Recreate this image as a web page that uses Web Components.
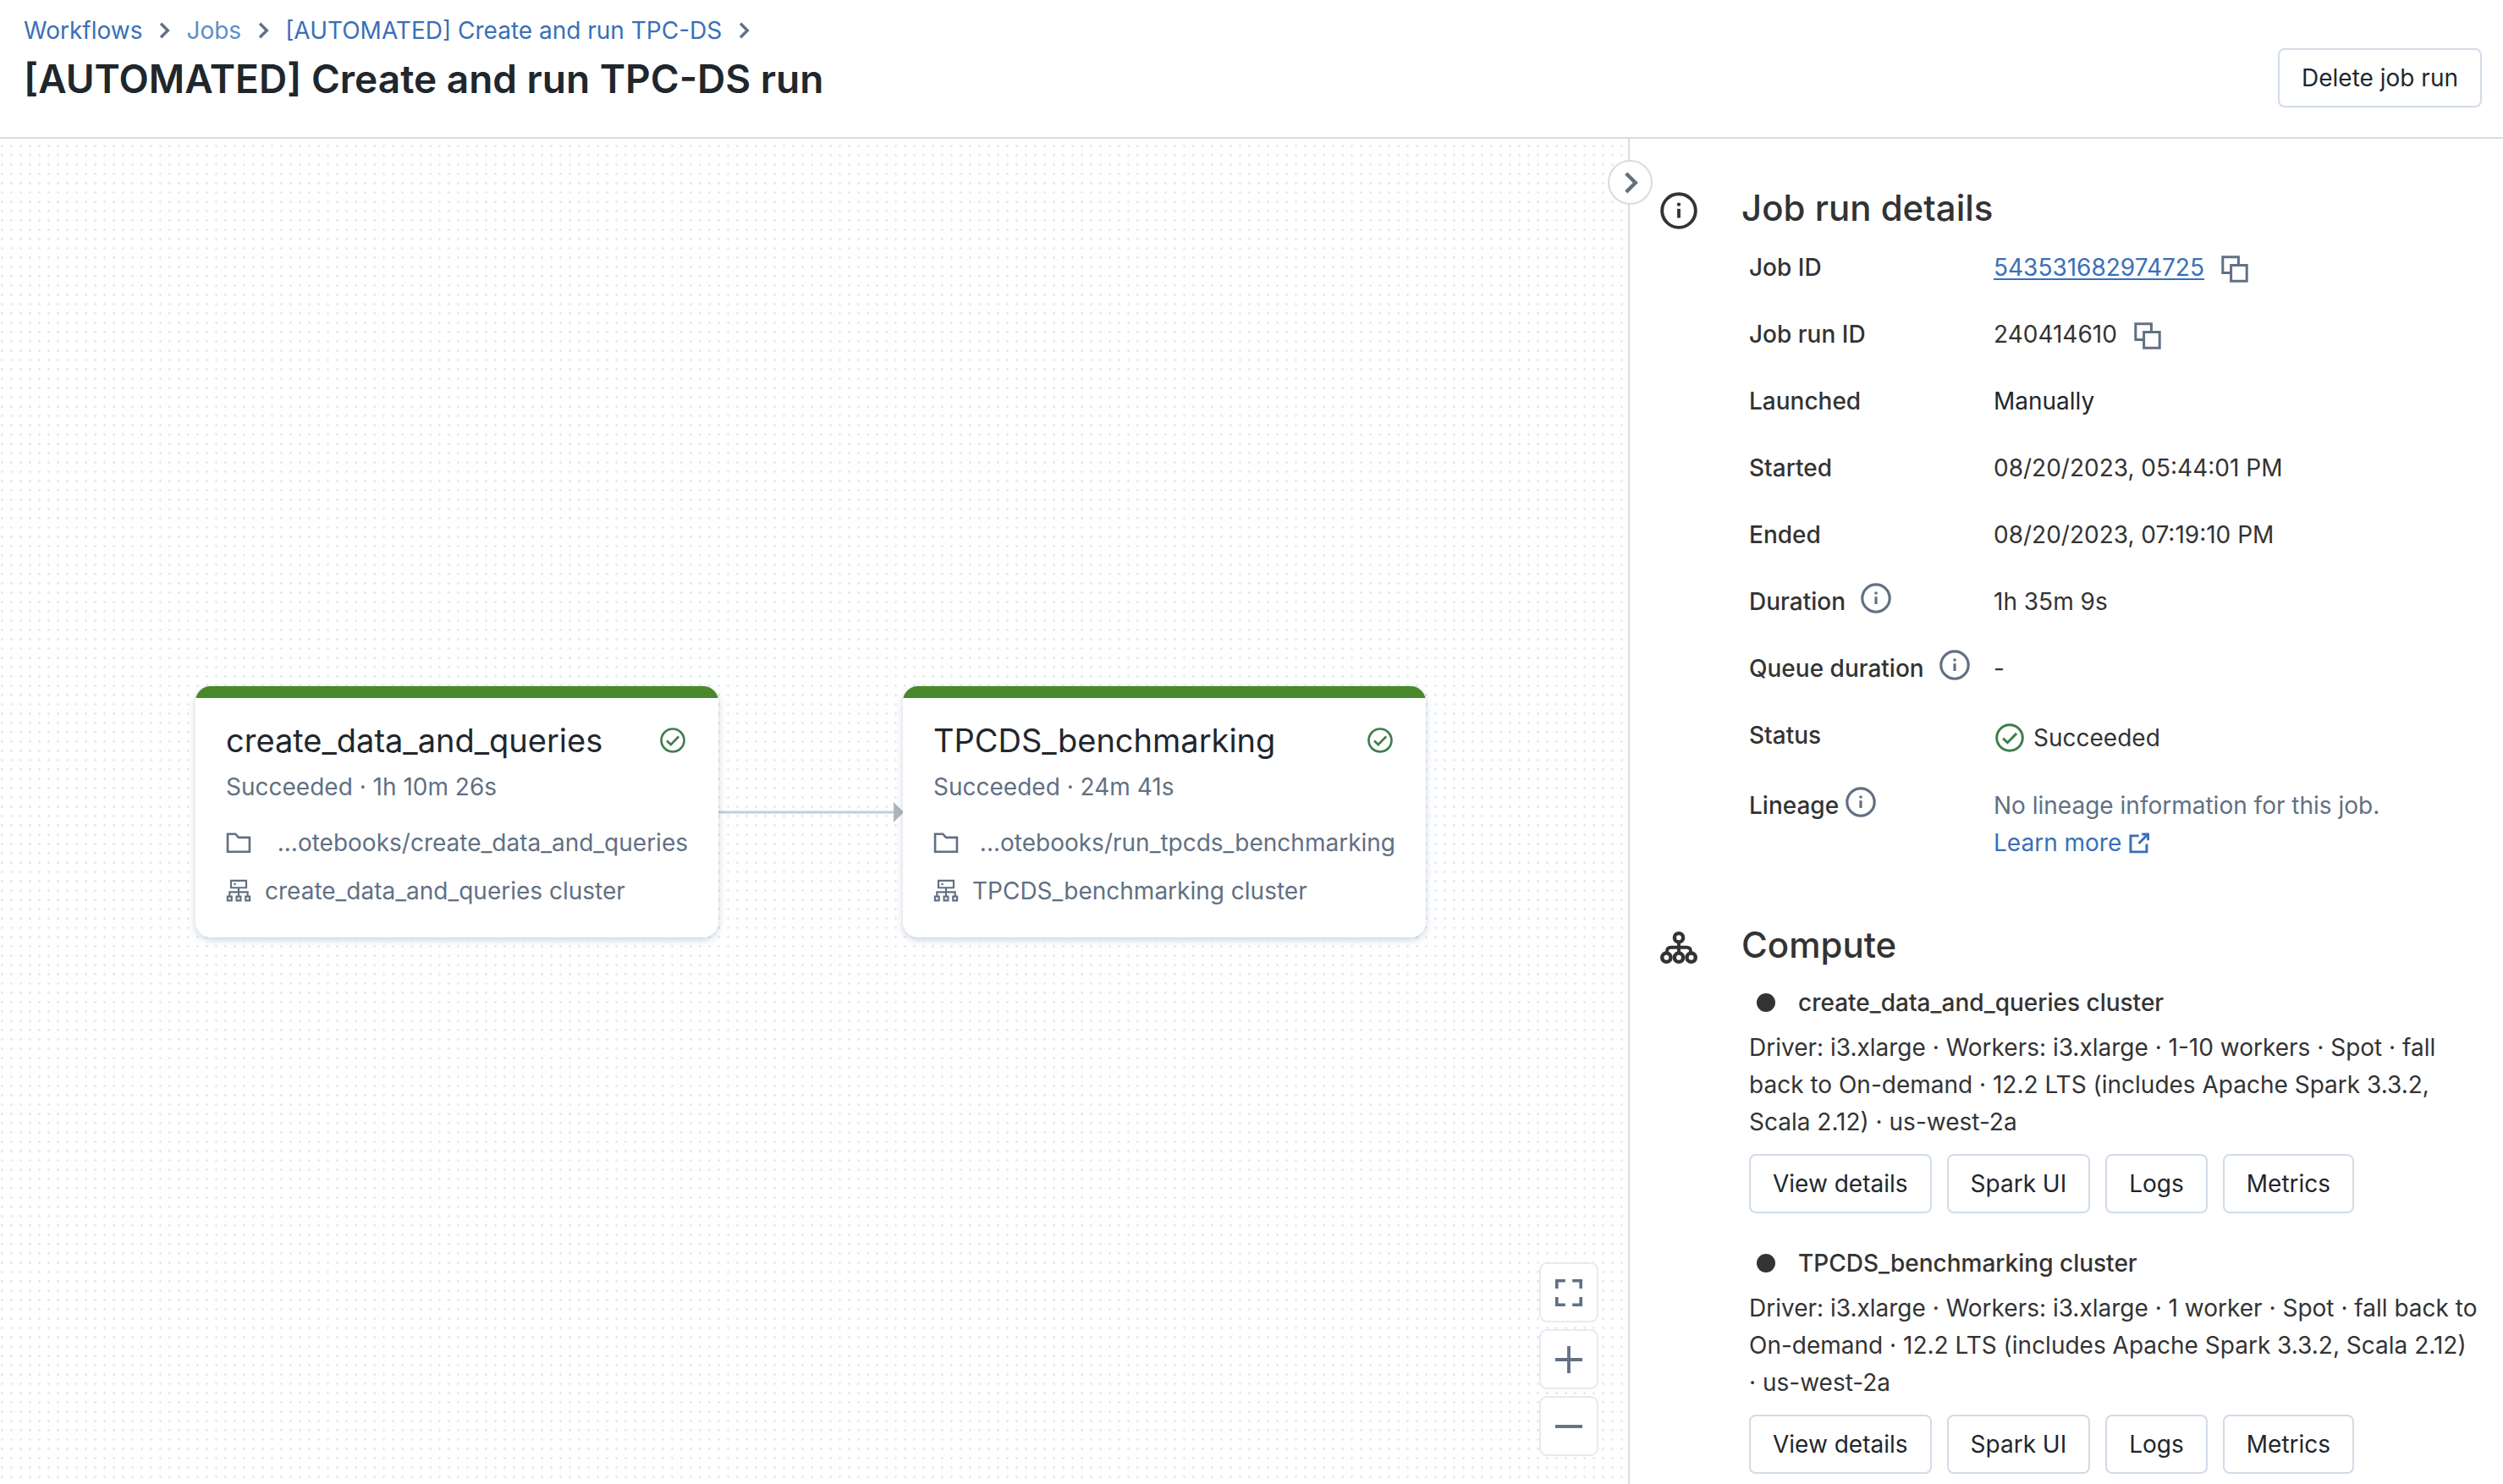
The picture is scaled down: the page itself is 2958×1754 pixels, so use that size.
<!DOCTYPE html>
<html lang="en">
<head>
<meta charset="utf-8">
<title>[AUTOMATED] Create and run TPC-DS run</title>
<style>
html,body{margin:0;height:100%}
body{font-family:Inter,"Liberation Sans",sans-serif;font-size:28px;line-height:44px;color:#333;background:#fff;overflow:hidden}
</style>
</head>
<body>
<job-run-page></job-run-page>
<script>
const ICONS = {
  chevron: '<svg viewBox="0 0 16 16" fill="none" stroke="currentColor" stroke-width="1.8"><path d="M5.9 3.6 10.3 8l-4.400 4.400"/></svg>',
  info: '<svg viewBox="0 0 16 16" fill="none" stroke="currentColor" stroke-width="1.4"><circle cx="8" cy="8" r="7.2"/><path d="M8 7.2v3.900"/><circle cx="8" cy="5.300" r=".8" fill="currentColor" stroke="none"/></svg>',
  copy: '<svg viewBox="0 0 16 16" fill="none" stroke="currentColor" stroke-width="1.5"><path d="M5.5 10.2H.9V.9h9.3v4.6"/><path d="M5.800 5.800h9.300v9.300H5.800z"/></svg>',
  check: '<svg viewBox="0 0 16 16" fill="none" stroke="currentColor" stroke-width="1.4"><circle cx="8" cy="8" r="7.2"/><path d="m4.300 8.300 2.500 2.400 5-5.100"/></svg>',
  folder: '<svg viewBox="0 0 16 16" fill="none" stroke="currentColor" stroke-width="1.4"><path d="M1.100 2.500h4.900l2 2.200h6.900v9H1.100z"/></svg>',
  cluster: '<svg viewBox="0 0 16 16" fill="none" stroke="currentColor" stroke-width="1.150"><path d="M3.200 1.500h9.600v4.500H3.200zM8 6v5.500M2.300 11.500V8.700h11.400v2.800M1 11.500h2.600v2.600H1zM6.700 11.500h2.600v2.600H6.700zM12.400 11.500H15v2.600h-2.600z"/><circle cx="5.600" cy="3.700" r=".7" fill="currentColor" stroke="none"/></svg>',
  compute: '<svg viewBox="0 0 16 16" fill="none" stroke="currentColor" stroke-width="1.600"><circle cx="8" cy="3.750" r="1.870"/><circle cx="2.670" cy="12.250" r="1.870"/><circle cx="8" cy="12.250" r="1.870"/><circle cx="13.330" cy="12.250" r="1.870"/><path stroke-width="1.400" d="M8 5.600v4.800M2.900 10.400V9.600q0-1.700 1.700-1.700h6.800q1.700 0 1.700 1.700v.8"/></svg>',
  external: '<svg viewBox="0 0 16 16" fill="none" stroke="currentColor" stroke-width="1.800"><path d="M7.800 3H1.800v11.700h11.700V8.900M10 1.800h4.500v4.500M14.400 1.900 7.700 8.600"/></svg>',
  fit: '<svg viewBox="0 0 16 16" fill="none" stroke="currentColor" stroke-width="1.800"><path d="M.9 5.500V.9h5M10.100.9h5v4.600M15.100 10.500v4.600h-5M5.900 15.100h-5v-4.600"/></svg>',
  plus: '<svg viewBox="0 0 16 16" fill="none" stroke="currentColor" stroke-width="1.900"><path d="M0 8h16M8 0v16"/></svg>',
  minus: '<svg viewBox="0 0 16 16" fill="none" stroke="currentColor" stroke-width="1.900"><path d="M0 8h16"/></svg>'
};
const RESET = '*{box-sizing:border-box}a{color:#3970b8;text-decoration:none}button{font:inherit;cursor:pointer;margin:0}';

function define(name, css, html) {
  customElements.define(name, class extends HTMLElement {
    connectedCallback() {
      if (this.shadowRoot) return;
      const t = document.createElement('template');
      t.innerHTML = '<style>' + RESET + css + '</style>' + (typeof html === 'function' ? html(this) : html);
      this.attachShadow({mode: 'open'}).append(t.content.cloneNode(true));
    }
  });
}

define('ui-icon',
  ':host{display:block;flex:none;width:32px;height:32px}svg{display:block;width:100%;height:100%;overflow:visible}',
  el => ICONS[el.getAttribute('name')]);

define('ui-button',
  ':host{display:block;flex:none}button{display:block;height:70px;padding:0 26px;border:2px solid #d1dce8;border-radius:8px;background:#fff;color:#1f272d;white-space:nowrap}',
  '<button type="button"><slot></slot></button>');

define('icon-button',
  `:host{display:block;flex:none}
   button{display:flex;align-items:center;justify-content:center;width:100%;height:100%;padding:0;border:0;background:none;color:inherit}
   :host([boxed]) button{width:70px;height:71px;border:2px solid #e4ebf0;border-radius:9px;background:#fff;color:#617083}
   :host([round]) button{width:53px;height:53px;border:2px solid #d8dce0;border-radius:50%;background:#fff;color:#65707d}`,
  el => `<button type="button" aria-label="${el.getAttribute('label')}"><slot></slot></button>`);

define('page-header',
  `:host{display:flex;align-items:flex-start;justify-content:space-between;padding:14px 25px 42px 28px;border-bottom:2px solid #d8dde1;background:#fff}
   nav{display:flex;align-items:center;gap:11px;color:#617083}
   nav ui-icon{width:30px;height:30px}
   h1{margin:8px 0 0;font-size:46px;line-height:54px;font-weight:600;color:#1f272d;white-space:nowrap}
   .actions{padding-top:43px;margin-bottom:-42px}`,
  `<div><nav aria-label="Breadcrumb"><a href="#w">Workflows</a><ui-icon name="chevron"></ui-icon><a href="#j" style="color:#5a8fc8">Jobs</a><ui-icon name="chevron"></ui-icon><a href="#r">[AUTOMATED] Create and run TPC-DS</a><ui-icon name="chevron"></ui-icon></nav>
   <h1>[AUTOMATED] Create and run TPC-DS run</h1></div><div class="actions"><ui-button>Delete job run</ui-button></div>`);

define('task-node',
  `:host{position:absolute;display:block;width:618px;height:297px;padding:41px 36px 0;border-radius:18px;background:#fff;overflow:hidden;box-shadow:0 3px 8px rgba(70,100,140,.28);color:#617083}
   .bar{position:absolute;inset:0 0 auto;height:14px;background:#4a882c}
   .row{display:flex;align-items:center;white-space:nowrap}
   h2{flex:1;margin:0;font-size:38px;line-height:46px;font-weight:400;color:#1f272d}
   .ok{margin-right:3px;color:#3f7d4c}
   .status{margin:10px 0 22px}.path{justify-content:space-between;margin-bottom:13px}
   .row ui-icon{width:30px;height:30px}.cluster{gap:16px}`,
  el => `<div class="bar"></div><div class="row"><h2>${el.getAttribute('name')}</h2><ui-icon class="ok" name="check"></ui-icon></div>
   <div class="status">${el.getAttribute('status')}</div>
   <div class="row path"><ui-icon name="folder"></ui-icon><span>${el.getAttribute('path')}</span></div>
   <div class="row cluster"><ui-icon name="cluster"></ui-icon><span>${el.getAttribute('name')} cluster</span></div>`);

define('task-graph',
  `:host{position:relative;display:block;flex:1;min-width:0;overflow:hidden;background:radial-gradient(circle,#e4eaf1 1px,transparent 2px) -3px 3px/11px 11px #fff}
   .edge{position:absolute;display:block;left:848px;top:782px;width:222px;height:28px}
   .tools{position:absolute;right:35px;bottom:33px;display:flex;flex-direction:column;gap:8px}`,
  `<svg class="edge" viewBox="0 0 222 28"><path d="M0 14h210" stroke="#c1cde0" stroke-width="3"/><path d="M208 2v24l12-12z" fill="#b1b5bb"/></svg>
   <task-node style="left:231px;top:647px" name="create_data_and_queries" status="Succeeded · 1h 10m 26s" path="...otebooks/create_data_and_queries"></task-node>
   <task-node style="left:1067px;top:647px" name="TPCDS_benchmarking" status="Succeeded · 24m 41s" path="...otebooks/run_tpcds_benchmarking"></task-node>
   <div class="tools"><icon-button boxed label="Fit to screen"><ui-icon name="fit"></ui-icon></icon-button><icon-button boxed label="Zoom in"><ui-icon name="plus"></ui-icon></icon-button><icon-button boxed label="Zoom out"><ui-icon name="minus"></ui-icon></icon-button></div>`);

define('side-section',
  `:host{display:grid;grid-template-columns:96px 1fr}
   .mark{width:44px;height:44px;margin-top:7px}
   h2{margin:0;font-size:42px;line-height:52px;font-weight:500;color:#333}
   .body{grid-column:2;padding-left:9px}`,
  el => `<ui-icon class="mark" name="${el.getAttribute('icon')}"></ui-icon><h2>${el.getAttribute('heading')}</h2><div class="body"><slot></slot></div>`);

define('detail-row',
  `:host{display:flex;min-height:79px;white-space:nowrap}
   .label{display:flex;flex:none;width:289px;gap:18px;font-weight:500}
   .label ui-icon{width:36px;height:36px;color:#617083}
   :host([tight]) .label{gap:8px}`,
  el => `<div class="label"><span>${el.getAttribute('label')}</span>${el.hasAttribute('info') ? '<ui-icon name="info"></ui-icon>' : ''}</div><div><slot></slot></div>`);

define('cluster-card',
  `:host{display:block;margin-bottom:37px}
   h3{display:flex;align-items:center;gap:27px;margin:0 0 9px;padding-left:9px;font-size:28px;line-height:44px;font-weight:500}
   h3::before{content:"";width:22px;height:22px;border-radius:50%;background:#333}
   p{margin:0 0 16px}
   .actions{display:flex;gap:18px}`,
  el => `<h3>${el.getAttribute('name')} cluster</h3><p><slot></slot></p>
   <div class="actions"><ui-button>View details</ui-button><ui-button>Spark UI</ui-button><ui-button>Logs</ui-button><ui-button>Metrics</ui-button></div>`);

define('run-sidebar',
  `:host{position:relative;display:block;flex:none;width:1034px;padding:56px 20px 0 36px;border-left:2px solid #d8dde1;background:#fff}
   .toggle{position:absolute;left:-26px;top:25px}
   .toggle ui-icon{width:40px;height:40px}
   .inline{display:flex;align-items:center}
   .id{text-decoration:underline;text-decoration-thickness:2px;text-underline-offset:3px;text-decoration-skip-ink:none}
   .inline icon-button{margin:4px 0 0 20px;color:#617083}
   .muted{color:#617083}.ok{color:#3f7d4c;margin:0 11px 0 2px;width:34px;height:34px}
   .ext{width:26px;height:26px;margin-left:8px}
   side-section + side-section{margin-top:39px}
   .status{padding-top:3px}
   detail-row:last-of-type{padding-top:4px;min-height:126px}
   detail-row:first-of-type{margin-top:22px}
   cluster-card:first-of-type{margin-top:20px}`,
  `<icon-button class="toggle" round label="Collapse panel"><ui-icon name="chevron"></ui-icon></icon-button>
   <side-section icon="info" heading="Job run details">
   <detail-row label="Job ID"><span class="inline"><a class="id" href="#id">543531682974725</a><icon-button label="Copy job ID"><ui-icon name="copy"></ui-icon></icon-button></span></detail-row>
   <detail-row label="Job run ID"><span class="inline">240414610<icon-button label="Copy job run ID"><ui-icon name="copy"></ui-icon></icon-button></span></detail-row>
   <detail-row label="Launched"><span style="color:#1f272d">Manually</span></detail-row>
   <detail-row label="Started">08/20/2023, 05:44:01 PM</detail-row>
   <detail-row label="Ended">08/20/2023, 07:19:10 PM</detail-row>
   <detail-row label="Duration" info>1h 35m 9s</detail-row>
   <detail-row label="Queue duration" info>-</detail-row>
   <detail-row label="Status"><span class="inline status"><ui-icon class="ok" name="check"></ui-icon>Succeeded</span></detail-row>
   <detail-row label="Lineage" info tight><span class="muted">No lineage information for this job.</span><br><a class="inline" href="#learn">Learn more<ui-icon class="ext" name="external"></ui-icon></a></detail-row>
   </side-section>
   <side-section icon="compute" heading="Compute">
   <cluster-card name="create_data_and_queries">Driver: i3.xlarge · Workers: i3.xlarge · 1-10 workers · Spot · fall back to On-demand · 12.2 LTS (includes Apache Spark 3.3.2, Scala 2.12) · us-west-2a</cluster-card>
   <cluster-card name="TPCDS_benchmarking">Driver: i3.xlarge · Workers: i3.xlarge · 1 worker · Spot · fall back to On-demand · 12.2 LTS (includes Apache Spark 3.3.2, Scala 2.12) ·&nbsp;us-west-2a</cluster-card>
   </side-section>`);

define('job-run-page',
  ':host{display:flex;flex-direction:column;height:100vh}main{display:flex;flex:1;min-height:0}',
  '<page-header></page-header><main><task-graph></task-graph><run-sidebar></run-sidebar></main>');
</script>
</body>
</html>
